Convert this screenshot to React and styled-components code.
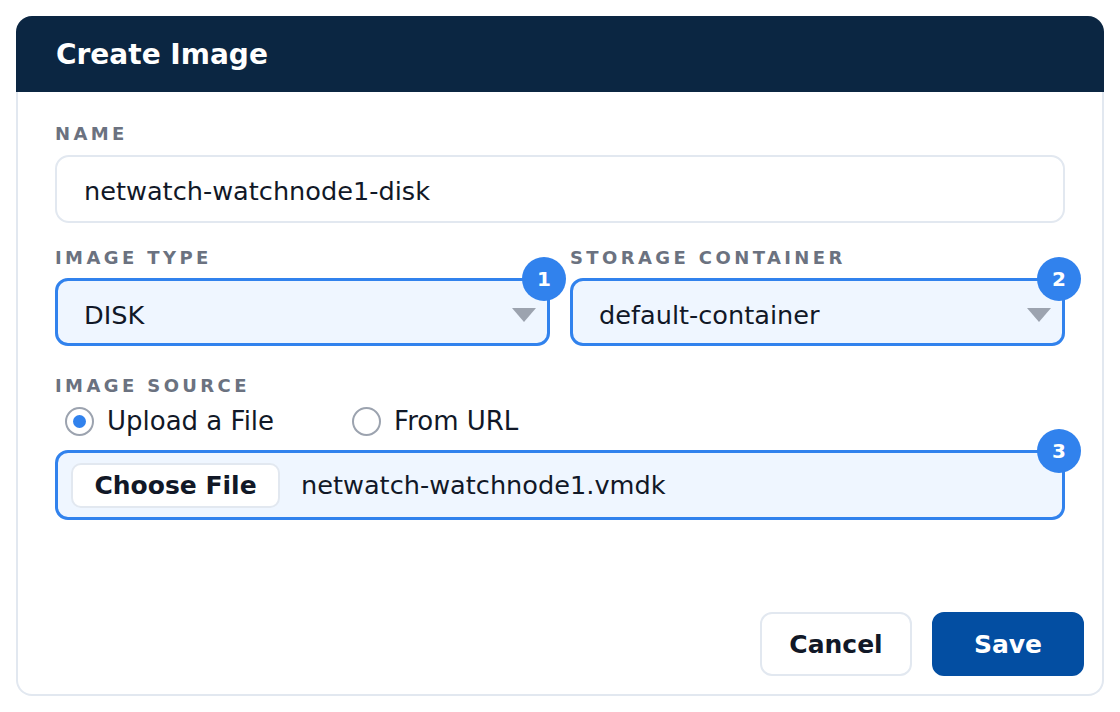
import React from "react";
import styled, { createGlobalStyle } from "styled-components";

const blue = "#3182ed";
const line = "#e2e8f0";

const GlobalStyle = createGlobalStyle`
  * {
    box-sizing: border-box;
  }
  body {
    margin: 0;
    padding: 16px;
    background: #ffffff;
    font-family: "DejaVu Sans", "Noto Sans", sans-serif;
    color: #111827;
  }
`;

const Card = styled.div`
  width: 1088px;
  height: 680px;
  display: flex;
  flex-direction: column;
`;

const Header = styled.div`
  height: 76px;
  background: #0b2642;
  border-radius: 16px 16px 0 0;
  display: flex;
  align-items: center;
  padding: 0 40px;
`;

const Title = styled.h2`
  margin: 0;
  font-size: 28px;
  font-weight: 700;
  color: #ffffff;
`;

const Body = styled.div`
  flex: 1;
  display: flex;
  flex-direction: column;
  border: 2px solid ${line};
  border-top: none;
  border-radius: 0 0 16px 16px;
`;

const Form = styled.div`
  flex: 1;
  padding: 31px 37px 0;
`;

const Field = styled.div`
  margin-bottom: ${(p) => p.$after || 0}px;
`;

const Row = styled.div`
  display: grid;
  grid-template-columns: 1fr 1fr;
  gap: 20px;
  margin-bottom: ${(p) => p.$after || 0}px;
`;

const Label = styled.div`
  font-size: 18px;
  font-weight: 700;
  line-height: 21px;
  letter-spacing: 3.4px;
  text-transform: uppercase;
  color: #6b7280;
  margin-bottom: ${(p) => p.$gap || 10}px;
`;

const TextInput = styled.input`
  display: block;
  width: 100%;
  height: 68px;
  padding: 4px 27px 0;
  border: 2px solid ${line};
  border-radius: 14px;
  background: #ffffff;
  font: inherit;
  font-size: 25.6px;
  color: #111827;
  outline: none;
`;

const Focusable = styled.div`
  position: relative;
`;

const SelectBox = styled.div`
  height: ${(p) => p.$height || 68}px;
  display: flex;
  align-items: center;
  justify-content: space-between;
  padding: 6px 11px 0 26px;
  border: 3px solid ${blue};
  border-radius: 13px;
  background: #eff6ff;
  font-size: 25.6px;
`;

const Caret = styled.span`
  width: 0;
  height: 0;
  border-left: 12px solid transparent;
  border-right: 12px solid transparent;
  border-top: 14px solid #9ca3af;
`;

const Badge = styled.span`
  position: absolute;
  top: -21px;
  right: -16px;
  width: 44px;
  height: 44px;
  border-radius: 50%;
  background: ${blue};
  color: #ffffff;
  font-size: 20px;
  font-weight: 700;
  display: flex;
  align-items: center;
  justify-content: center;
`;

const RadioGroup = styled.div`
  display: flex;
  align-items: center;
  gap: 78px;
  padding-left: 10px;
  margin-bottom: 14px;
`;

const RadioLabel = styled.label`
  display: flex;
  align-items: center;
  gap: 13px;
  height: 30px;
  font-size: 26px;
  line-height: 30px;
  cursor: pointer;
`;

const RadioRing = styled.span`
  width: 29px;
  height: 29px;
  border-radius: 50%;
  border: 2px solid #9ca3af;
  background: #ffffff;
  display: flex;
  align-items: center;
  justify-content: center;

  &::after {
    content: "";
    width: 13px;
    height: 13px;
    border-radius: 50%;
    background: ${(p) => (p.$checked ? blue : "transparent")};
  }
`;

const FileBox = styled(SelectBox)`
  justify-content: flex-start;
  gap: 21px;
  padding: 0 13px;
`;

const ChooseButton = styled.button`
  height: 45px;
  width: 209px;
  border: 2px solid ${line};
  border-radius: 10px;
  background: #ffffff;
  font: inherit;
  font-size: 25px;
  font-weight: 700;
  color: #111827;
`;

const FileName = styled.span`
  font-size: 25.6px;
`;

const Footer = styled.div`
  display: flex;
  justify-content: flex-end;
  gap: 20px;
  padding: 0 18px 18px;
`;

const Button = styled.button`
  height: 64px;
  width: 152px;
  border-radius: 12px;
  font: inherit;
  font-size: 25px;
  font-weight: 700;
  cursor: pointer;
  border: 2px solid ${(p) => (p.$primary ? "#034ea2" : line)};
  background: ${(p) => (p.$primary ? "#034ea2" : "#ffffff")};
  color: ${(p) => (p.$primary ? "#ffffff" : "#111827")};
`;

const Select = ({ value, step }) => (
  <Focusable>
    <SelectBox>
      <span>{value}</span>
      <Caret />
    </SelectBox>
    <Badge>{step}</Badge>
  </Focusable>
);

export default function App() {
  return (
    <>
      <GlobalStyle />
      <Card>
        <Header>
          <Title>Create Image</Title>
        </Header>
        <Body>
          <Form>
            <Field $after={24}>
              <Label $gap={11}>Name</Label>
              <TextInput readOnly value="netwatch-watchnode1-disk" />
            </Field>
            <Row $after={29}>
              <div>
                <Label>Image Type</Label>
                <Select value="DISK" step={1} />
              </div>
              <div>
                <Label>Storage Container</Label>
                <Select value="default-container" step={2} />
              </div>
            </Row>
            <Field>
              <Label $gap={10}>Image Source</Label>
              <RadioGroup>
                <RadioLabel>
                  <RadioRing $checked />
                  Upload a File
                </RadioLabel>
                <RadioLabel>
                  <RadioRing />
                  From URL
                </RadioLabel>
              </RadioGroup>
              <Focusable>
                <FileBox $height={70}>
                  <ChooseButton>Choose File</ChooseButton>
                  <FileName>netwatch-watchnode1.vmdk</FileName>
                </FileBox>
                <Badge>3</Badge>
              </Focusable>
            </Field>
          </Form>
          <Footer>
            <Button>Cancel</Button>
            <Button $primary>Save</Button>
          </Footer>
        </Body>
      </Card>
    </>
  );
}
